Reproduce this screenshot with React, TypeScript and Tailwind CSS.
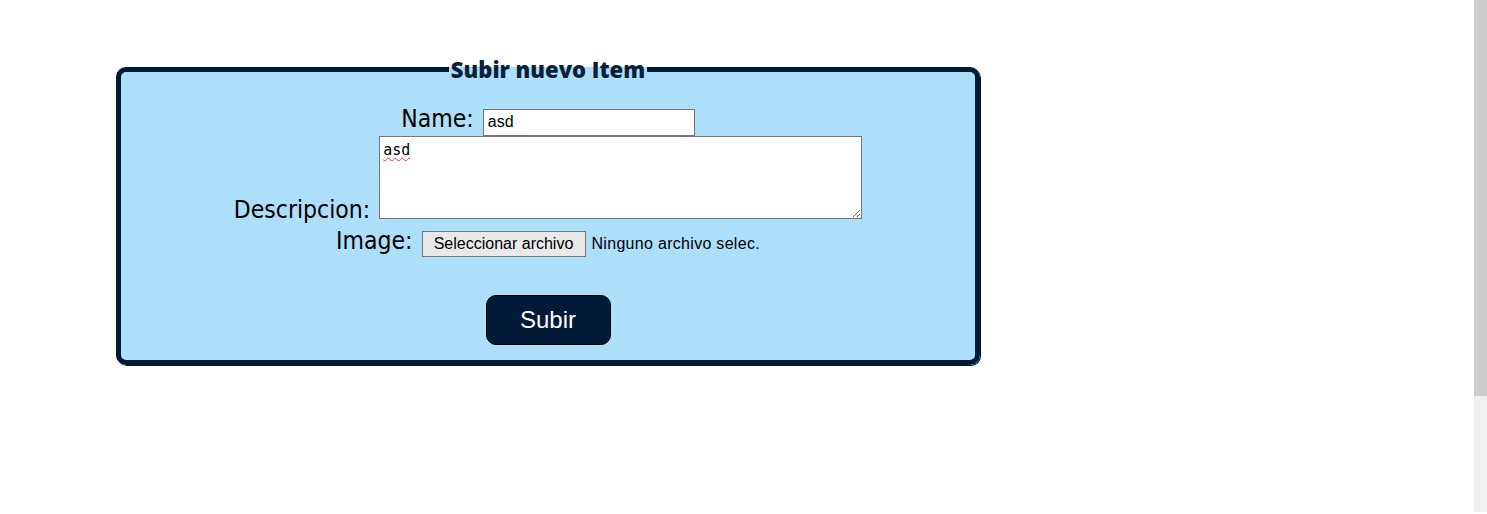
import React from "react";

export default function App() {
  const label = "text-[24.5px] leading-[24px] text-black [font-family:'DejaVu_Sans_Condensed','DejaVu_Sans',sans-serif] [font-stretch:condensed]";
  return (
    <div className="flex h-[514px] w-[1487px] overflow-hidden bg-white">
      <div className="flex-1 pl-[116px] pt-[55px]">
        <fieldset className="w-[864px] rounded-[10px] border-[5px] border-[#011a33] bg-[#addffa] pb-[15px] shadow-[1px_1px_0_#011a33]">
          <legend className="mx-auto px-[2px] text-[22px] leading-[28px] font-extrabold text-[#0b1f3a] [font-family:'Open_Sans',sans-serif]">
            Subir nuevo Item
          </legend>
          <div className="flex flex-col items-center pt-[24px]">
            <div className="flex items-baseline justify-center gap-[9px]">
              <span className={label}>Name:</span>
              <input
                type="text"
                defaultValue="asd"
                className="h-[27px] w-[212px] border border-[#767676] bg-white px-[4px] text-[16px] text-black outline-none [font-family:'Liberation_Sans',Arial,sans-serif]"
              />
            </div>
            <div className="flex items-end justify-center gap-[9px]">
              <span className={label + " mb-[-3px]"}>Descripcion:</span>
              <textarea
                defaultValue="asd"
                spellCheck={false}
                className="block h-[83px] w-[483px] resize border border-[#767676] bg-white px-[3px] pt-[4px] text-[15px] leading-[18px] text-black outline-none [font-family:'DejaVu_Sans_Mono',monospace] underline decoration-wavy decoration-red-500 decoration-[1px] underline-offset-[2px]"
              />
            </div>
            <div className="mt-[10px] flex items-baseline justify-center gap-[9px]">
              <span className={label}>Image:</span>
              <span className="flex items-baseline gap-[6px] text-[16px] text-black [font-family:'Liberation_Sans',Arial,sans-serif]">
                <button className="h-[26px] w-[164px] border border-[#767676] bg-[#e9e9e9] text-[16px] text-black">
                  Seleccionar archivo
                </button>
                <span className="tracking-[0.3px]">Ninguno archivo selec.</span>
              </span>
            </div>
            <button className="mt-[38px] h-[50px] w-[125px] rounded-[10px] border border-black bg-[#001a38] text-[24px] text-white [font-family:'Liberation_Sans',Arial,sans-serif]">
              Subir
            </button>
          </div>
        </fieldset>
      </div>
      <div className="flex h-full w-[13px] flex-col">
        <div className="h-[396px] bg-[#cdcdcd]" />
        <div className="h-[116px] bg-[#f0f0f0]" />
      </div>
    </div>
  );
}
